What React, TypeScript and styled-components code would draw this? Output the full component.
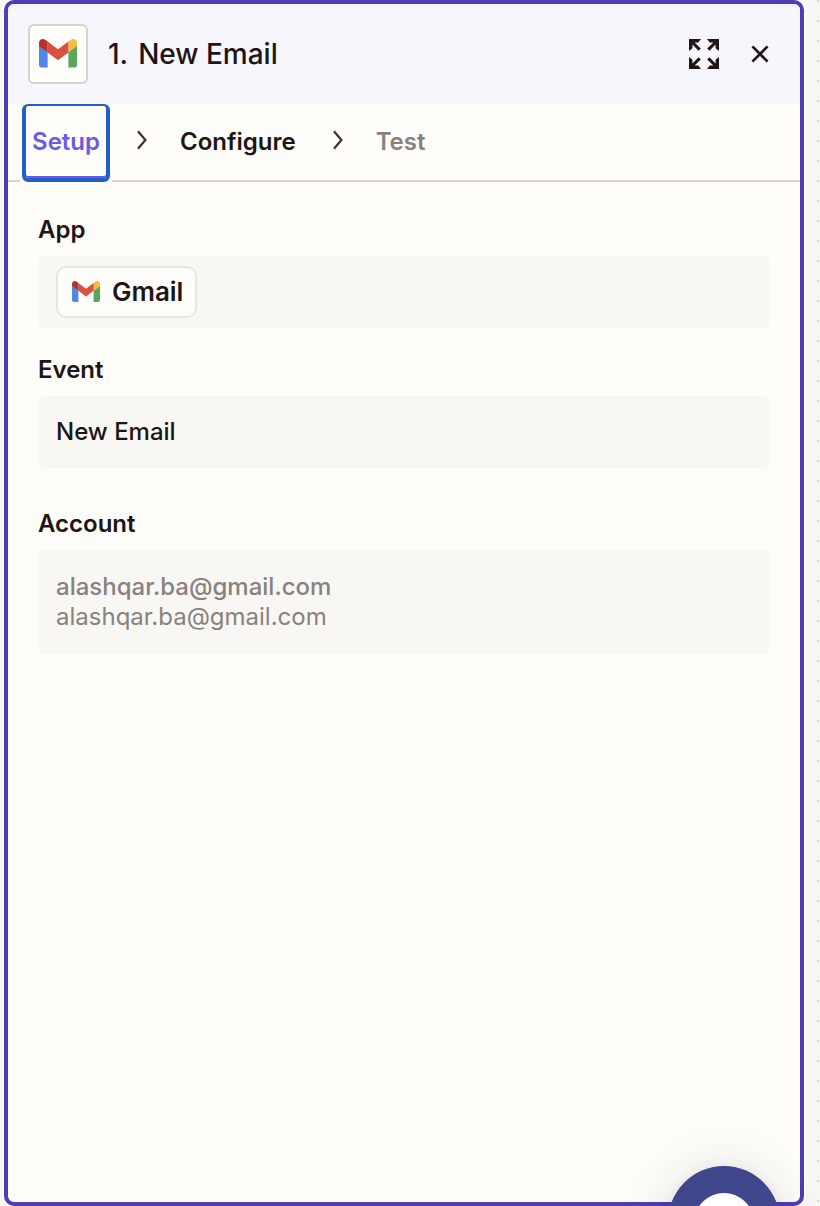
import React from "react";
import styled, { createGlobalStyle } from "styled-components";

const ink = "#201515";
const muted = "#88827e";
const paper = "#fffdf9";

const GlobalStyle = createGlobalStyle`
  *, *::before, *::after { box-sizing: border-box; }
  body {
    margin: 0;
    background: #f8f7f4;
    color: ${ink};
    font-family: Inter, "Liberation Sans", sans-serif;
  }
`;

const Canvas = styled.main`
  position: relative;
  height: 1206px;
  padding: 0 14px 0 4px;
  overflow: hidden;
  background-image: conic-gradient(from 90deg at 18px 18px, #d9d7d2 0 90deg, #f8f7f4 90deg 360deg);
  background-size: 20px 20px;
  background-position: 19px 2px;
`;

const Panel = styled.section`
  display: flex;
  flex-direction: column;
  width: 800px;
  height: 1206px;
  border: 4px solid #4d3eb8;
  border-radius: 10px;
  background: ${paper};
  box-shadow: 0 0 0 2px ${paper};
  overflow: hidden;
`;

const Header = styled.header`
  display: flex;
  align-items: center;
  flex: none;
  height: 100px;
  padding: 0 20px;
  background: #f7f6fd;
`;

const AppTile = styled.div`
  display: flex;
  align-items: center;
  justify-content: center;
  width: 60px;
  height: 60px;
  padding-bottom: 1px;
  border: 2px solid #d7d3c9;
  border-radius: 6px;
  background: ${paper};
`;

const Title = styled.h1`
  display: flex;
  flex: 1;
  gap: 10px;
  margin: 0 0 0 20px;
  font-size: 28px;
  font-weight: 500;
  line-height: 40px;
`;

const IconButton = styled.button`
  display: flex;
  align-items: center;
  justify-content: center;
  width: 40px;
  height: 40px;
  margin-left: 16px;
  padding: 0;
  border: 0;
  background: none;
  color: ${ink};
`;

const Steps = styled.nav`
  display: flex;
  align-items: stretch;
  flex: none;
  height: 78px;
  padding-left: 12px;
  border-bottom: 2px solid #d7d3c9;
`;

const StepTab = styled.button<{ $color: string }>`
  display: flex;
  align-items: center;
  height: 76px;
  padding: 0;
  border: 0;
  background: none;
  color: ${(p) => p.$color};
  font: 600 24px/30px Inter, "Liberation Sans", sans-serif;
`;

const ActiveTab = styled(StepTab)`
  justify-content: center;
  width: 92px;
  height: 78px;
  flex: none;
  border: solid ${paper};
  border-width: 0 2px;
  background: ${paper};
`;

const FocusRing = styled.span`
  display: flex;
  align-items: center;
  justify-content: center;
  width: 88px;
  height: 78px;
  border: 4px solid #2460c4;
  border-top-width: 2px;
  border-radius: 6px;
  box-shadow: inset 0 -2px 0 #695be8;
`;

const Chevron = styled.svg<{ $left: number; $right: number }>`
  flex: none;
  align-self: center;
  margin: 0 ${(p) => p.$right}px 4px ${(p) => p.$left}px;
`;

const Form = styled.div`
  padding: 33px 30px 0;
`;

const Field = styled.div<{ $gap: number }>`
  margin-bottom: ${(p) => p.$gap}px;
`;

const Label = styled.div`
  margin-bottom: 11px;
  font-size: 24px;
  font-weight: 600;
  line-height: 30px;
`;

const Box = styled.div<{ $height: number; $muted?: boolean }>`
  display: flex;
  flex-direction: column;
  justify-content: center;
  align-items: flex-start;
  height: ${(p) => p.$height}px;
  padding: 0 18px;
  border-radius: 6px;
  background: #f8f7f4;
  color: ${(p) => (p.$muted ? muted : ink)};
  font-size: 24px;
  line-height: 30px;
`;

const Value = styled.span<{ $weight: number }>`
  font-weight: ${(p) => p.$weight};
`;

const AppChip = styled.div`
  display: flex;
  align-items: center;
  gap: 12px;
  height: 52px;
  padding: 0 12px 0 14px;
  border: 2px solid #e8e7df;
  border-radius: 10px;
  background: ${paper};
  font-size: 26px;
  font-weight: 600;

  svg {
    margin-bottom: 1px;
  }
`;

const HelpBubble = styled.div`
  position: absolute;
  left: 668px;
  top: 1166px;
  width: 112px;
  height: 112px;
  padding: 27px 26px;
  border-radius: 50%;
  background: #3f468c;
  box-shadow: 0 2px 12px rgba(0, 0, 0, 0.07), 0 4px 56px rgba(0, 0, 0, 0.13);
`;

const HelpFace = styled.div`
  width: 60px;
  height: 60px;
  border-radius: 50%;
  background: #fff;
`;

function GmailLogo({ width }: { width: number }) {
  return (
    <svg width={width} height={width * 0.75} viewBox="0 0 88 66" aria-hidden="true">
      <path fill="#5086ec" d="M6 66h14V30L0 15v45c0 3.3 2.7 6 6 6" />
      <path fill="#58a55c" d="M68 66h14c3.3 0 6-2.7 6-6V15L68 30" />
      <path fill="#f1bd42" d="M68 6v25l20-15V9c0-7.4-8.5-11.6-14.4-7.2" />
      <path fill="#d85140" d="M20 31V6l24 18L68 6v25L44 49" />
      <path fill="#b2342a" d="M0 9v7l20 15V6l-5.6-4.2C8.5-2.6 0 1.6 0 9" />
    </svg>
  );
}

function ExpandIcon() {
  return (
    <svg width="30" height="30" viewBox="0 0 30 30" aria-hidden="true">
      {[0, 90, 180, 270].map((angle) => (
        <g key={angle} transform={`rotate(${angle} 15 15)`}>
          <path fill="currentColor" d="M0 0H12L9.2 3.4H5.6L11.8 9.6 9.6 11.8 3.4 5.6V9.2L0 12Z" />
        </g>
      ))}
    </svg>
  );
}

function CloseIcon() {
  return (
    <svg width="18" height="18" viewBox="0 0 18 18" aria-hidden="true">
      <path d="M1.4 1.4 16.6 16.6M16.6 1.4 1.4 16.6" stroke="currentColor" strokeWidth="2.7" />
    </svg>
  );
}

function StepChevron({ left, right }: { left: number; right: number }) {
  return (
    <Chevron $left={left} $right={right} width="12" height="20" viewBox="0 0 12 20" aria-hidden="true">
      <path d="M2 1.2 9.4 10 2 18.8" fill="none" stroke="#403735" strokeWidth="2.3" />
    </Chevron>
  );
}

export default function App() {
  return (
    <>
      <GlobalStyle />
      <Canvas>
        <Panel>
          <Header>
            <AppTile>
              <GmailLogo width={38} />
            </AppTile>
            <Title>
              <span>1.</span>
              <span>New Email</span>
            </Title>
            <IconButton aria-label="Expand">
              <ExpandIcon />
            </IconButton>
            <IconButton aria-label="Close">
              <CloseIcon />
            </IconButton>
          </Header>
          <Steps>
            <ActiveTab $color="#695be8">
              <FocusRing>Setup</FocusRing>
            </ActiveTab>
            <StepChevron left={24} right={32} />
            <StepTab $color={ink}>Configure</StepTab>
            <StepChevron left={36} right={32} />
            <StepTab $color={muted}>Test</StepTab>
          </Steps>
          <Form>
            <Field $gap={27}>
              <Label>App</Label>
              <Box $height={72}>
                <AppChip>
                  <GmailLogo width={28} />
                  Gmail
                </AppChip>
              </Box>
            </Field>
            <Field $gap={41}>
              <Label>Event</Label>
              <Box $height={72}>
                <Value $weight={500}>New Email</Value>
              </Box>
            </Field>
            <Field $gap={0}>
              <Label>Account</Label>
              <Box $height={104} $muted>
                <Value $weight={500}>alashqar.ba@gmail.com</Value>
                <Value $weight={400}>alashqar.ba@gmail.com</Value>
              </Box>
            </Field>
          </Form>
        </Panel>
        <HelpBubble>
          <HelpFace />
        </HelpBubble>
      </Canvas>
    </>
  );
}
